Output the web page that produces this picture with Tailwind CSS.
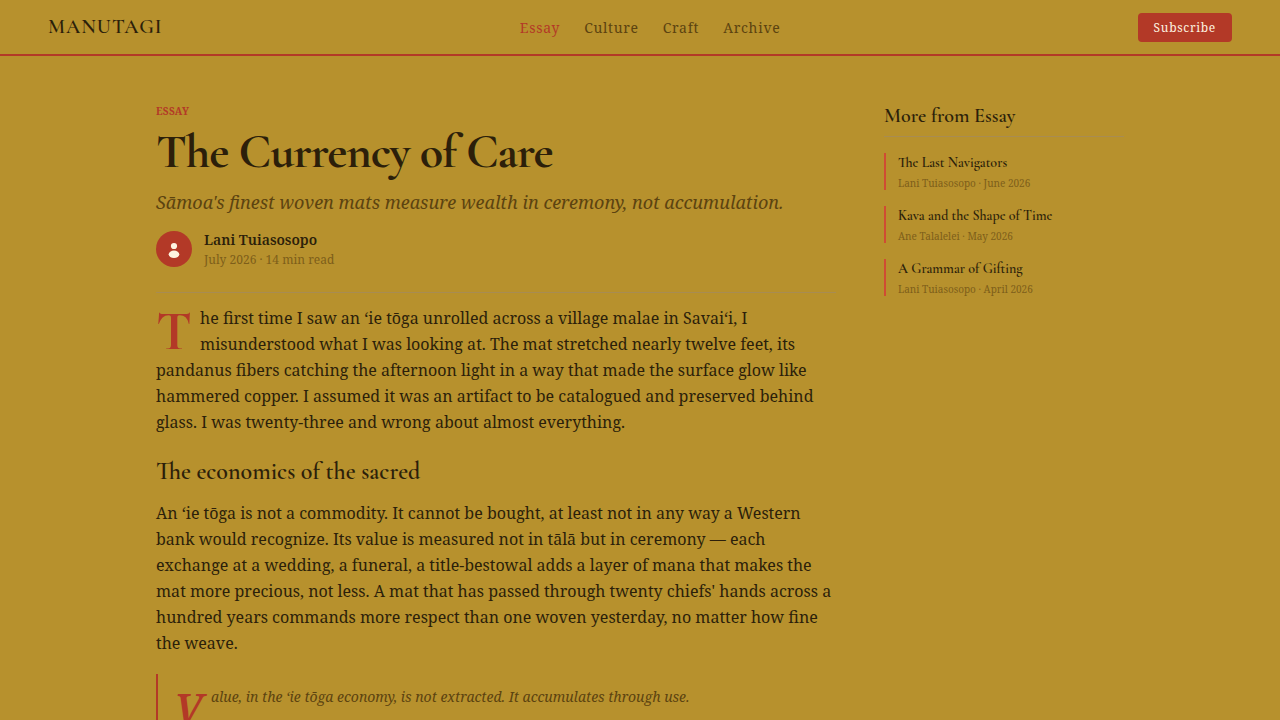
<!DOCTYPE html>
<html lang="en">
<head>
<meta charset="utf-8">
<meta name="viewport" content="width=device-width, initial-scale=1">
<title>The Currency of Care — Manutagi</title>
<script src="https://cdn.jsdelivr.net/npm/@tailwindcss/browser@4"></script>
</head>
<body class="h-screen overflow-hidden bg-[#b7912d] font-['Noto_Serif','Liberation_Serif',serif] text-[#2c1f0a]">
<header class="flex h-14 items-center justify-between border-b-2 border-[#b33927] px-12">
  <a href="#" class="font-['Cormorant_Garamond','Liberation_Serif',serif] text-[20px] leading-6 font-semibold tracking-[1px]">MANUTAGI</a>
  <nav class="flex gap-6 text-[14px] leading-[21px] tracking-[0.7px] text-[#5c4310]">
    <a href="#" class="text-[#b33927]">Essay</a>
    <a href="#">Culture</a>
    <a href="#">Craft</a>
    <a href="#">Archive</a>
  </nav>
  <button type="button" class="rounded-[4px] bg-[#b33927] px-4 py-1.5 text-[12px] leading-[17px] tracking-[0.7px] text-[#fdf3e0]">Subscribe</button>
</header>
<main class="mx-auto flex max-w-[968px] items-start gap-12 pt-12">
  <article class="min-w-0 flex-1">
    <p class="text-[10px] leading-[15px] font-bold tracking-[0.3px] text-[#b33927]">ESSAY</p>
    <h1 class="mt-[5px] font-['Cormorant_Garamond','Liberation_Serif',serif] text-[48px] leading-[56px] font-bold tracking-[-1px]">The Currency of Care</h1>
    <p class="mt-2 text-[18px] leading-7 text-[#5c4310] italic">Sāmoa's finest woven mats measure wealth in ceremony, not accumulation.</p>
    <div class="mt-3.5 flex items-center gap-3 border-b border-[#a88c52] pb-6">
      <span class="flex size-9 items-center justify-center rounded-full bg-[#b33927]">
        <svg class="size-9" viewBox="0 0 36 36" fill="#fdf3e0" aria-hidden="true"><circle cx="18" cy="15" r="3.1"/><ellipse cx="18" cy="23.3" rx="5.3" ry="3.7"/></svg>
      </span>
      <div>
        <p class="text-[14px] leading-5 font-semibold">Lani Tuiasosopo</p>
        <p class="mt-px text-[12px] leading-[17px] text-[#7d5e1a]">July 2026 · 14 min read</p>
      </div>
    </div>
    <p class="mt-3 text-[16px] leading-[26px]"><span class="float-left mt-1 pr-2 font-['Cormorant_Garamond','Liberation_Serif',serif] text-[56px] leading-[44px] font-bold text-[#b33927]">T</span>he first time I saw an ʻie tōga unrolled across a village malae in Savaiʻi, I misunderstood what I was looking at. The mat stretched nearly twelve feet, its pandanus fibers catching the afternoon light in a way that made the surface glow like hammered copper. I assumed it was an artifact to be catalogued and preserved behind glass. I was twenty-three and wrong about almost everything.</p>
    <h2 class="mt-[21px] font-['Cormorant_Garamond','Liberation_Serif',serif] text-[24px] leading-8 font-semibold">The economics of the sacred</h2>
    <p class="mt-3 text-[16px] leading-[26px]">An ʻie tōga is not a commodity. It cannot be bought, at least not in any way a Western bank would recognize. Its value is measured not in tālā but in ceremony — each exchange at a wedding, a funeral, a title-bestowal adds a layer of mana that makes the mat more precious, not less. A mat that has passed through twenty chiefs' hands across a hundred years commands more respect than one woven yesterday, no matter how fine the weave.</p>
    <blockquote class="mt-[18px] border-l-2 border-[#b33927] py-3 pl-4 text-[14px] leading-[22px] text-[#5c4310] italic">
      <p><span class="float-left mt-1 pr-2 text-[42px] leading-[36px] font-semibold text-[#b33927]">V</span>alue, in the ʻie tōga economy, is not extracted. It accumulates through use.</p>
    </blockquote>
  </article>
  <aside class="w-60 shrink-0">
    <h2 class="border-b border-[#a88c52] pb-2 font-['Cormorant_Garamond','Liberation_Serif',serif] text-[20px] leading-6 font-semibold">More from Essay</h2>
    <ul class="mt-4 flex flex-col gap-4">
      <li class="border-l-2 border-[#cf4c33] pl-3"><a href="#" class="block font-['Cormorant_Garamond','Liberation_Serif',serif] text-[14px] leading-5 font-semibold">The Last Navigators</a><p class="mt-1 text-[10px] leading-[13px] text-[#7d5e1a]">Lani Tuiasosopo · June 2026</p></li>
      <li class="border-l-2 border-[#cf4c33] pl-3"><a href="#" class="block font-['Cormorant_Garamond','Liberation_Serif',serif] text-[14px] leading-5 font-semibold">Kava and the Shape of Time</a><p class="mt-1 text-[10px] leading-[13px] text-[#7d5e1a]">Ane Talalelei · May 2026</p></li>
      <li class="border-l-2 border-[#cf4c33] pl-3"><a href="#" class="block font-['Cormorant_Garamond','Liberation_Serif',serif] text-[14px] leading-5 font-semibold">A Grammar of Gifting</a><p class="mt-1 text-[10px] leading-[13px] text-[#7d5e1a]">Lani Tuiasosopo · April 2026</p></li>
    </ul>
  </aside>
</main>
</body>
</html>
